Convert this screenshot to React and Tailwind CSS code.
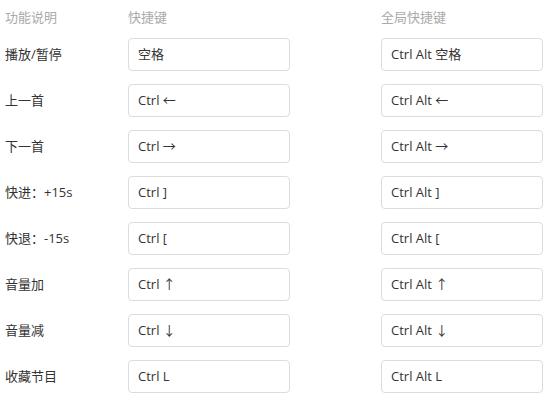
import React from "react";

const rows = [
  { label: "播放/暂停", key: "空格", global: "Ctrl Alt 空格" },
  { label: "上一首", key: "Ctrl ←", global: "Ctrl Alt ←" },
  { label: "下一首", key: "Ctrl →", global: "Ctrl Alt →" },
  { label: "快进：+15s", key: "Ctrl ]", global: "Ctrl Alt ]" },
  { label: "快退：-15s", key: "Ctrl [", global: "Ctrl Alt [" },
  { label: "音量加", key: "Ctrl ↑", global: "Ctrl Alt ↑" },
  { label: "音量减", key: "Ctrl ↓", global: "Ctrl Alt ↓" },
  { label: "收藏节目", key: "Ctrl L", global: "Ctrl Alt L" },
];

const font = {
  fontFamily: '"Open Sans", "Noto Sans CJK SC", sans-serif',
};

const KeyBox = ({ value }) => (
  <div className="h-[33px] border border-[#dcdcdc] rounded-[4px] bg-white flex items-center px-[9px] text-[13px] text-[#333]">
    {value}
  </div>
);

const App = () => {
  return (
    <div className="w-[551px] h-[404px] bg-white pl-[5px] pt-[8px]" style={font}>
      <div className="grid grid-cols-[123px_162px_91px_162px] items-center h-[18px] text-[13px] text-[#aaaaaa]">
        <div>功能说明</div>
        <div>快捷键</div>
        <div />
        <div>全局快捷键</div>
      </div>
      <div className="flex flex-col gap-[13px] mt-[12px]">
        {rows.map(({ label, key, global }) => (
          <div
            key={label}
            className="grid grid-cols-[123px_162px_91px_162px] items-center"
          >
            <div className="text-[13px] text-[#333]">{label}</div>
            <KeyBox value={key} />
            <div />
            <KeyBox value={global} />
          </div>
        ))}
      </div>
    </div>
  );
};

export default App;
